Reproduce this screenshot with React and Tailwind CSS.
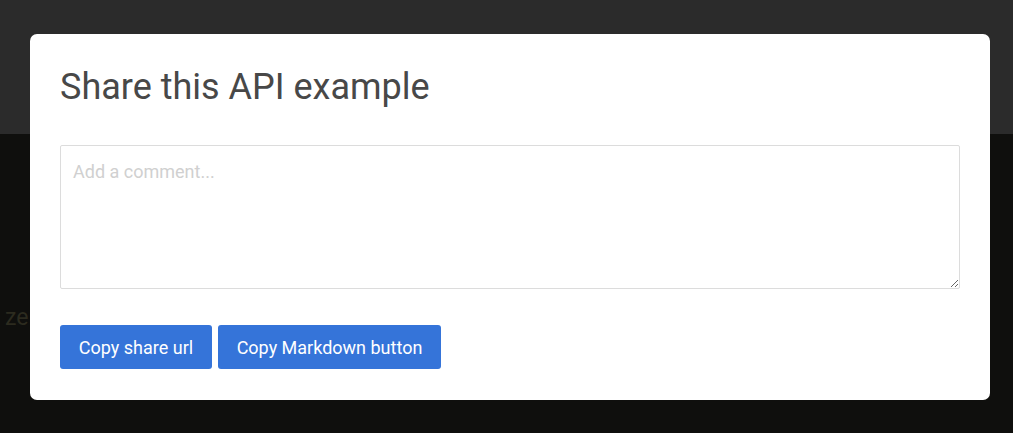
export default function App() {
  return (
    <div className="relative h-[433px] w-[1013px] overflow-hidden bg-[#0f0f0d] font-['Roboto',sans-serif]">
      {/* page behind the overlay */}
      <div className="h-[134px] bg-[#2b2b2b]" />
      <div className="mt-[170px] pl-[5px] whitespace-nowrap text-[23px] leading-[28px] text-[#2c2b1f]">ze</div>

      {/* modal */}
      <div className="absolute left-[30px] top-[34px] flex h-[366px] w-[960px] flex-col rounded-[7px] bg-white px-[30px] pt-[30px]">
        <h2 className="text-[36px] leading-[46px] font-normal text-[#484848]">Share this API example</h2>
        <textarea
          placeholder="Add a comment..."
          className="mt-[35px] h-[144px] w-[900px] rounded-[2px] border border-[#dcdcdc] px-[12px] pt-[14px] pb-[12px] text-[18px] leading-[24px] text-[#444] outline-none placeholder:text-[#d0d0d0]"
        />
        <div className="mt-[36px] flex gap-[6px]">
          <button className="h-[44px] w-[152px] rounded-[3px] bg-[#3574d9] pt-[1px] text-[18px] text-white">Copy share url</button>
          <button className="h-[44px] w-[223px] rounded-[3px] bg-[#3574d9] pt-[1px] text-[18px] text-white">Copy Markdown button</button>
        </div>
      </div>
    </div>
  );
}
